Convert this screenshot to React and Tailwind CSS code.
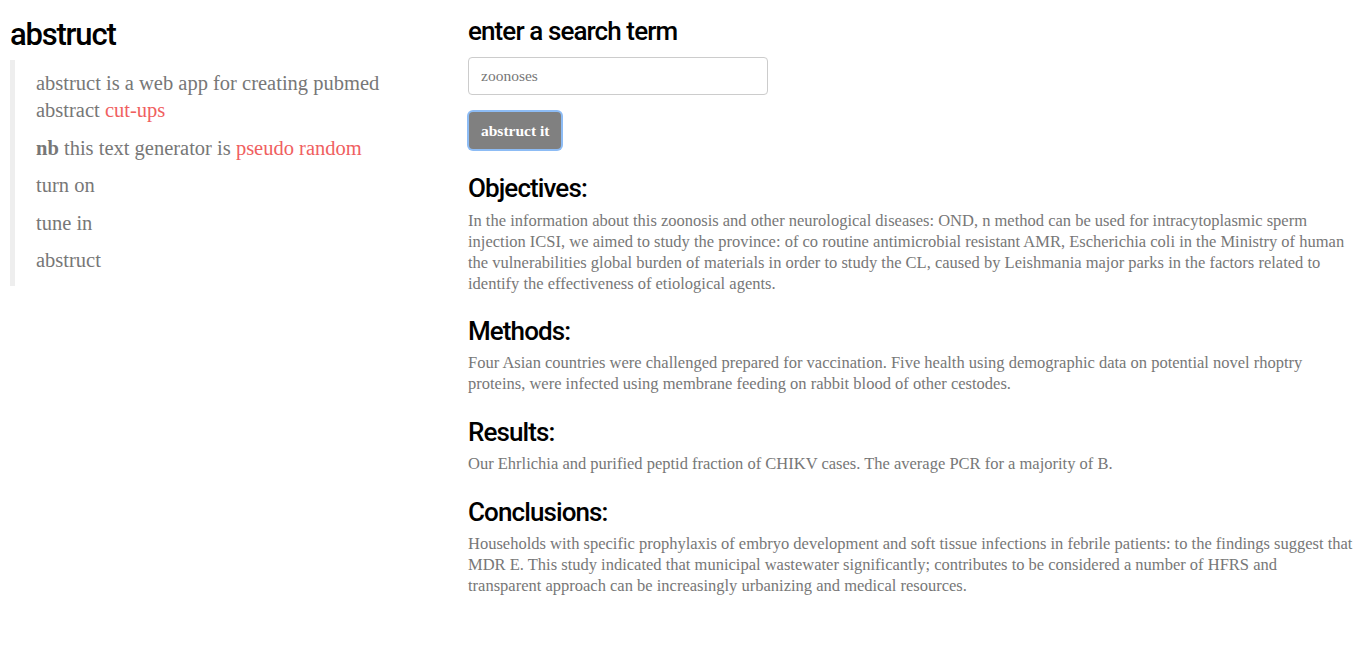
import React from 'react';

const HEAD = "font-['Roboto','Liberation_Sans',sans-serif] font-medium text-black";
const SERIF = "font-['Liberation_Serif','DejaVu_Serif',serif]";

const SECTIONS = [
  {
    title: 'Objectives:',
    text: 'In the information about this zoonosis and other neurological diseases: OND, n method can be used for intracytoplasmic sperm injection ICSI, we aimed to study the province: of co routine antimicrobial resistant AMR, Escherichia coli in the Ministry of human the vulnerabilities global burden of materials in order to study the CL, caused by Leishmania major parks in the factors related to identify the effectiveness of etiological agents.',
  },
  {
    title: 'Methods:',
    text: 'Four Asian countries were challenged prepared for vaccination. Five health using demographic data on potential novel rhoptry proteins, were infected using membrane feeding on rabbit blood of other cestodes.',
  },
  {
    title: 'Results:',
    text: 'Our Ehrlichia and purified peptid fraction of CHIKV cases. The average PCR for a majority of B.',
  },
  {
    title: 'Conclusions:',
    text: 'Households with specific prophylaxis of embryo development and soft tissue infections in febrile patients: to the findings suggest that MDR E. This study indicated that municipal wastewater significantly; contributes to be considered a number of HFRS and transparent approach can be increasingly urbanizing and medical resources.',
  },
];

export default function App() {
  return (
    <div className={`flex min-h-[662px] bg-white ${SERIF}`}>
      {/* sidebar */}
      <div className="w-[468px] shrink-0 pl-[10px] pr-[25px] pt-[16px]">
        <h1 className={`${HEAD} text-[31px] leading-[38px] tracking-[-1.2px]`}>abstruct</h1>
        <blockquote className="mt-[6px] border-l-[5px] border-[#eeeeee] pl-[21px] pt-[10px] pb-[1px] text-[20.5px] leading-[27px] text-[#777777]">
          <p className="mb-[10.5px]">
            abstruct is a web app for creating pubmed abstract{' '}
            <a href="#" className="text-[#f0605f]">cut-ups</a>
          </p>
          <p className="mb-[10.5px]">
            <b>nb</b> this text generator is <a href="#" className="text-[#f0605f]">pseudo random</a>
          </p>
          <p className="mb-[10.5px]">turn on</p>
          <p className="mb-[10.5px]">tune in</p>
          <p className="mb-[10.5px]">abstruct</p>
        </blockquote>
      </div>

      {/* main */}
      <div className="flex-1 pr-[14px] pt-[14px]">
        <h2 className={`${HEAD} text-[26px] leading-[34px] tracking-[-0.9px]`}>enter a search term</h2>
        <input
          type="text"
          defaultValue="zoonoses"
          className="mt-[9px] block h-[38px] w-[300px] rounded-[4px] border border-[#cccccc] px-[12px] text-[15.5px] text-[#777777] outline-none"
        />
        <button className="ml-[1px] mt-[17px] h-[37px] rounded-[4px] bg-[#808080] px-[12px] text-[15.5px] font-bold text-white ring-[2px] ring-[#8dbcf5]">
          abstruct it
        </button>

        <div className="mt-[22px] space-y-[20.3px]">
          {SECTIONS.map((s) => (
            <section key={s.title}>
              <h3 className={`${HEAD} text-[26px] leading-[34px] tracking-[-0.9px]`}>{s.title}</h3>
              <p className="mt-[4.6px] text-[16.5px] leading-[21px] text-[#777777]">{s.text}</p>
            </section>
          ))}
        </div>
      </div>
    </div>
  );
}
